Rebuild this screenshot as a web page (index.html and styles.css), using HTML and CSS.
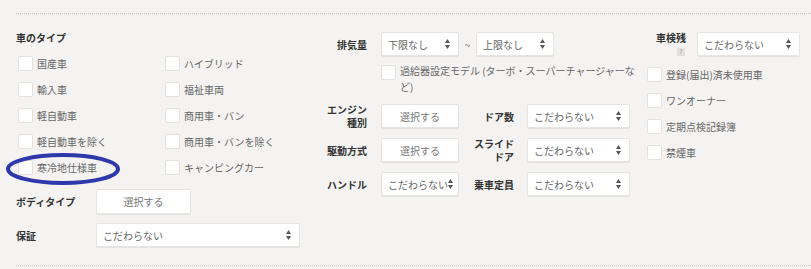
FILE: index.html
```html
<!DOCTYPE html>
<html lang="ja">
<head>
<meta charset="utf-8">
<title>検索条件</title>
<link rel="stylesheet" href="styles.css">
</head>
<body>
<div class="page">
  <div class="rule"></div>
  <div class="cols">
    <div class="col-left">
      <div class="title">車のタイプ</div>
      <div class="checks">
        <div class="check"><span class="box"></span>国産車</div>
        <div class="check"><span class="box"></span>ハイブリッド</div>
        <div class="check"><span class="box"></span>輸入車</div>
        <div class="check"><span class="box"></span>福祉車両</div>
        <div class="check"><span class="box"></span>軽自動車</div>
        <div class="check"><span class="box"></span>商用車・バン</div>
        <div class="check"><span class="box"></span>軽自動車を除く</div>
        <div class="check"><span class="box"></span>商用車・バンを除く</div>
        <div class="check"><span class="box"></span>寒冷地仕様車</div>
        <div class="check"><span class="box"></span>キャンピングカー</div>
      </div>
      <svg class="mark" width="118" height="36" viewBox="0 0 118 36"><ellipse cx="59" cy="18" rx="55" ry="14" fill="none" stroke="#2f38aa" stroke-width="4"/></svg>
      <div class="frow">
        <div class="flabel">ボディタイプ</div>
        <div class="btn w95">選択する</div>
      </div>
      <div class="frow">
        <div class="flabel">保証</div>
        <div class="select w204"><span>こだわらない</span><svg class="arr" width="5" height="10" viewBox="0 0 5 10"><path d="M2.5 0L5 4H0z M0 6h5L2.5 10z" fill="#555"/></svg></div>
      </div>
    </div>

    <div class="col-mid">
      <div class="mrow">
        <div class="mlabel w65">排気量</div>
        <div class="select w78"><span>下限なし</span><svg class="arr" width="5" height="10" viewBox="0 0 5 10"><path d="M2.5 0L5 4H0z M0 6h5L2.5 10z" fill="#555"/></svg></div>
        <div class="tilde">~</div>
        <div class="select w78"><span>上限なし</span><svg class="arr" width="5" height="10" viewBox="0 0 5 10"><path d="M2.5 0L5 4H0z M0 6h5L2.5 10z" fill="#555"/></svg></div>
      </div>
      <div class="mopt">
        <span class="box"></span>
        <span class="opttext">過給器設定モデル (ターボ・スーパーチャージャーな<br>ど)</span>
      </div>
      <div class="mrow gap-top">
        <div class="mlabel w65"><span>エンジン種別</span></div>
        <div class="btn w78">選択する</div>
        <div class="mlabel w68"><span>ドア数</span></div>
        <div class="select w103"><span>こだわらない</span><svg class="arr" width="5" height="10" viewBox="0 0 5 10"><path d="M2.5 0L5 4H0z M0 6h5L2.5 10z" fill="#555"/></svg></div>
      </div>
      <div class="mrow">
        <div class="mlabel w65"><span>駆動方式</span></div>
        <div class="btn w78">選択する</div>
        <div class="mlabel w68"><span>スライドドア</span></div>
        <div class="select w103"><span>こだわらない</span><svg class="arr" width="5" height="10" viewBox="0 0 5 10"><path d="M2.5 0L5 4H0z M0 6h5L2.5 10z" fill="#555"/></svg></div>
      </div>
      <div class="mrow">
        <div class="mlabel w65"><span>ハンドル</span></div>
        <div class="select w78 tight"><span>こだわらない</span><svg class="arr" width="5" height="10" viewBox="0 0 5 10"><path d="M2.5 0L5 4H0z M0 6h5L2.5 10z" fill="#555"/></svg></div>
        <div class="mlabel w68"><span>乗車定員</span></div>
        <div class="select w103"><span>こだわらない</span><svg class="arr" width="5" height="10" viewBox="0 0 5 10"><path d="M2.5 0L5 4H0z M0 6h5L2.5 10z" fill="#555"/></svg></div>
      </div>
    </div>

    <div class="col-right">
      <div class="rrow">
        <div class="rlabel">
          <span class="rtext">車検残</span>
          <span class="help">?</span>
        </div>
        <div class="select w103"><span>こだわらない</span><svg class="arr" width="5" height="10" viewBox="0 0 5 10"><path d="M2.5 0L5 4H0z M0 6h5L2.5 10z" fill="#555"/></svg></div>
      </div>
      <div class="rchecks">
        <div class="check"><span class="box"></span>登録(届出)済未使用車</div>
        <div class="check"><span class="box"></span>ワンオーナー</div>
        <div class="check"><span class="box"></span>定期点検記録簿</div>
        <div class="check"><span class="box"></span>禁煙車</div>
      </div>
    </div>
  </div>
  <div class="rule bottom"></div>
</div>
</body>
</html>
```

FILE: styles.css
```css
* { box-sizing: border-box; }
html, body {
  margin: 0;
  padding: 0;
  background: #f4f3f1;
}
body {
  font-family: "Noto Sans CJK JP", "Noto Sans", sans-serif;
  font-size: 10px;
  color: #666;
  width: 811px;
  height: 269px;
  overflow: hidden;
}
.page {
  padding: 13px 0 0 16px;
}
.rule {
  border-top: 1px dotted #c9c8c5;
}
.rule.bottom {
  margin-top: 18px;
}
.cols {
  display: flex;
  align-items: flex-start;
  padding-top: 18px;
}

/* left column */
.col-left {
  width: 300px;
  position: relative;
}
.title {
  font-weight: 700;
  color: #333;
  line-height: 12px;
  margin-bottom: 6px;
}
.checks {
  display: grid;
  grid-template-columns: 147px 1fr;
  grid-auto-rows: 26px;
}
.check {
  display: flex;
  align-items: center;
  gap: 4px;
  white-space: nowrap;
  color: #666;
}
.box {
  display: inline-block;
  flex: none;
  width: 15px;
  height: 15px;
  margin-left: 2px;
  background: #fff;
  border: 1px solid #e3e2df;
  border-radius: 2px;
}
.mark {
  position: absolute;
  left: -12px;
  top: 119px;
}
.frow {
  display: flex;
  align-items: center;
  margin-top: 9px;
}
.flabel {
  width: 80px;
  font-weight: 700;
  color: #333;
}

/* controls */
.btn, .select {
  background: #fff;
  border: 1px solid #e6e5e2;
  border-radius: 2px;
  box-shadow: 0 1px 1px rgba(0, 0, 0, 0.07);
  height: 24px;
  display: flex;
  align-items: center;
  flex: none;
}
.btn {
  justify-content: center;
  color: #777;
}
.select {
  justify-content: space-between;
  padding: 0 8px 0 6px;
  color: #666;
  white-space: nowrap;
}
.select.tight {
  padding: 0 5px 0 6px;
}
.arr {
  flex: none;
  display: block;
}
.w95 { width: 95px; height: 25px; }
.w204 { width: 204px; }
.w78 { width: 78px; }
.w103 { width: 103px; }

/* middle column */
.col-mid {
  width: 331px;
}
.mrow {
  display: flex;
  align-items: center;
  height: 24px;
}
.mrow + .mrow {
  margin-top: 10px;
}
.mrow.gap-top {
  margin-top: 9px;
}
.mlabel {
  display: flex;
  justify-content: flex-end;
  align-items: center;
  text-align: right;
  font-weight: 700;
  color: #333;
  line-height: 13px;
  flex: none;
}
.mlabel.w65 { width: 65px; padding: 0 14px 0 6px; }
.mlabel.w68 { width: 68px; padding: 0 13px 0 10px; }
.tilde {
  width: 17px;
  text-align: center;
  color: #777;
  flex: none;
}
.mopt {
  display: flex;
  align-items: flex-start;
  gap: 4px;
  margin-top: 7px;
  padding-left: 63px;
}
.mopt .box {
  margin-top: 2px;
}
.opttext {
  line-height: 16px;
  white-space: nowrap;
  color: #666;
}

/* right column */
.col-right {
  width: 164px;
}
.rrow {
  display: flex;
  align-items: flex-start;
}
.rlabel {
  width: 50px;
  padding-right: 11px;
  display: flex;
  flex-direction: column;
  align-items: flex-end;
}
.rtext {
  font-weight: 700;
  color: #333;
  line-height: 12px;
}
.help {
  width: 8px;
  height: 8px;
  margin-top: 4px;
  margin-right: 1px;
  background: #e2e1de;
  color: #888;
  font-size: 6px;
  line-height: 8px;
  text-align: center;
}
.rchecks {
  display: grid;
  grid-auto-rows: 26px;
  margin-top: 5px;
}
.rchecks .box {
  margin-left: 0;
}
```
